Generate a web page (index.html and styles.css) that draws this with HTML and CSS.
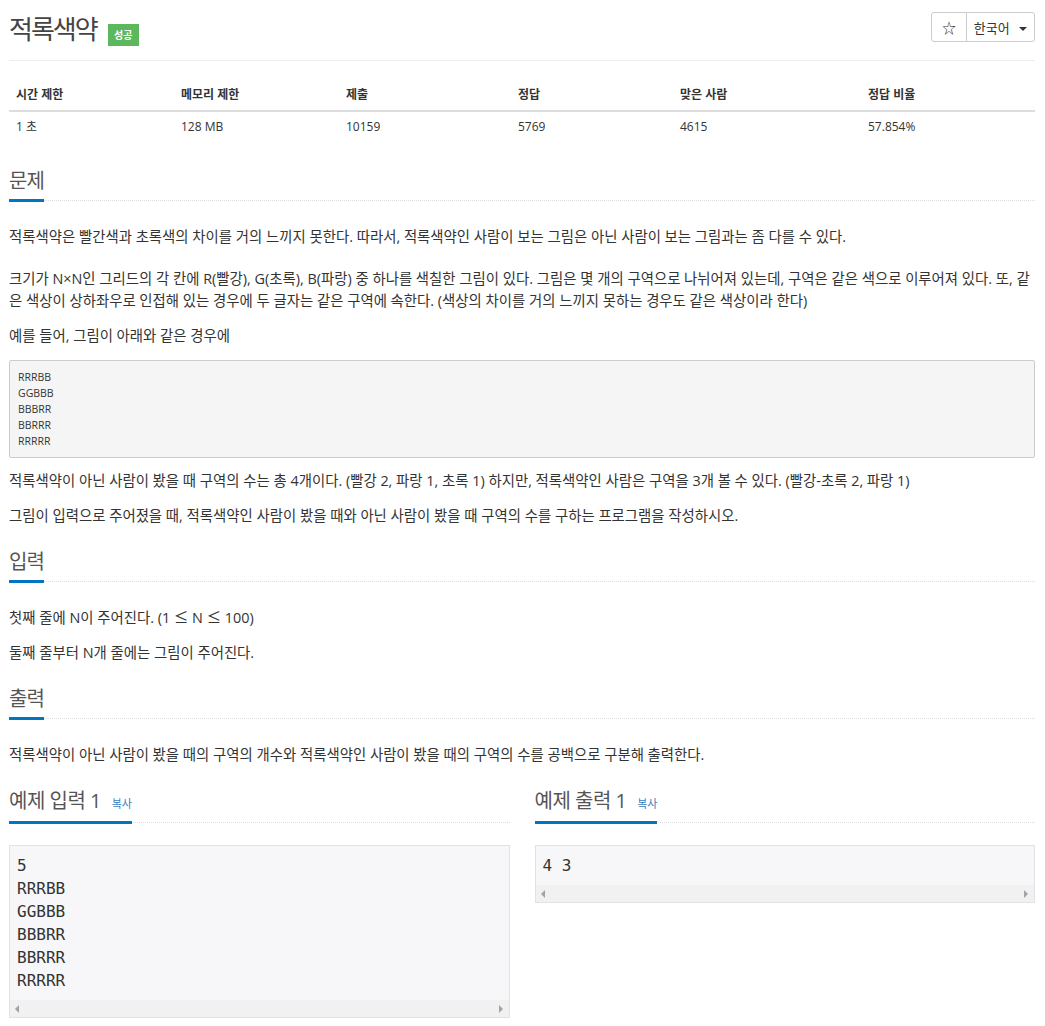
FILE: index.html
```html
<!DOCTYPE html>
<html>
<head>
    <meta charset="utf-8">
    <title>적록색약</title>
    <link rel="stylesheet" href="styles.css">
</head>
<body>
    <div class="page">
        <div class="page-header">
            <h1 class="title">적록색약<span class="badge-ok">성공</span></h1>
            <div class="btn-group">
                <button class="btn btn-star">☆</button>
                <button class="btn btn-lang">한국어 <span class="caret"></span></button>
            </div>
        </div>

        <table class="info">
            <thead>
                <tr>
                    <th>시간 제한</th>
                    <th>메모리 제한</th>
                    <th>제출</th>
                    <th>정답</th>
                    <th>맞은 사람</th>
                    <th>정답 비율</th>
                </tr>
            </thead>
            <tbody>
                <tr>
                    <td>1 초</td>
                    <td>128 MB</td>
                    <td>10159</td>
                    <td>5769</td>
                    <td>4615</td>
                    <td>57.854%</td>
                </tr>
            </tbody>
        </table>

        <!-- 문제 -->
        <section class="problem-section">
            <div class="headline"><h2>문제</h2></div>
            <div class="problem-text">
                <p>적록색약은 빨간색과 초록색의 차이를 거의 느끼지 못한다. 따라서, 적록색약인 사람이 보는 그림은 아닌 사람이 보는 그림과는 좀 다를 수 있다.</p>
                <p class="tall-first">크기가 N×N인 그리드의 각 칸에 R(빨강), G(초록), B(파랑) 중 하나를 색칠한 그림이 있다. 그림은 몇 개의 구역으로 나뉘어져 있는데, 구역은 같은 색으로 이루어져 있다. 또, 같은 색상이 상하좌우로 인접해 있는 경우에 두 글자는 같은 구역에 속한다. (색상의 차이를 거의 느끼지 못하는 경우도 같은 색상이라 한다)</p>
                <p>예를 들어, 그림이 아래와 같은 경우에</p>
                <pre class="grid-example">RRRBB
GGBBB
BBBRR
BBRRR
RRRRR</pre>
                <p>적록색약이 아닌 사람이 봤을 때 구역의 수는 총 4개이다. (빨강 2, 파랑 1, 초록 1) 하지만, 적록색약인 사람은 구역을 3개 볼 수 있다. (빨강-초록 2, 파랑 1)</p>
                <p>그림이 입력으로 주어졌을 때, 적록색약인 사람이 봤을 때와 아닌 사람이 봤을 때 구역의 수를 구하는 프로그램을 작성하시오.</p>
            </div>
        </section>

        <!-- 입력 -->
        <section class="problem-section">
            <div class="headline"><h2>입력</h2></div>
            <div class="problem-text">
                <p>첫째 줄에 N이 주어진다. (1 <span class="math">≤</span> N <span class="math">≤</span> 100)</p>
                <p>둘째 줄부터 N개 줄에는 그림이 주어진다.</p>
            </div>
        </section>

        <!-- 출력 -->
        <section class="problem-section">
            <div class="headline"><h2>출력</h2></div>
            <div class="problem-text">
                <p>적록색약이 아닌 사람이 봤을 때의 구역의 개수와 적록색약인 사람이 봤을 때의 구역의 수를 공백으로 구분해 출력한다.</p>
            </div>
        </section>

        <div class="samples">
            <section class="sample">
                <div class="headline"><h2>예제 입력 1 <a class="copy">복사</a></h2></div>
                <div class="sampledata">
                    <pre>5
RRRBB
GGBBB
BBBRR
BBRRR
RRRRR</pre>
                    <div class="hscroll"><span class="arrow-left"></span><span class="arrow-right"></span></div>
                </div>
            </section>
            <section class="sample">
                <div class="headline"><h2>예제 출력 1 <a class="copy">복사</a></h2></div>
                <div class="sampledata">
                    <pre>4 3</pre>
                    <div class="hscroll"><span class="arrow-left"></span><span class="arrow-right"></span></div>
                </div>
            </section>
        </div>
    </div>
</body>
</html>
```

FILE: styles.css
```css
body {
    font-family: "Open Sans", "Noto Sans CJK KR", sans-serif;
    color: #333;
    background-color: #fff;
    margin: 0;
    padding: 0;
}
.page {
    margin-left: 9px;
    width: 1026px;
}
.page-header {
    display: flex;
    justify-content: space-between;
    align-items: flex-start;
    padding-top: 12px;
    height: 48px;
    border-bottom: 1px solid #eee;
}
.title {
    display: flex;
    align-items: center;
    margin: 0;
    font-size: 26px;
    font-weight: normal;
    letter-spacing: -2px;
    line-height: 30px;
    color: #444;
}
.badge-ok {
    display: inline-block;
    margin-left: 11px;
    margin-top: 12px;
    width: 31px;
    height: 22px;
    line-height: 22px;
    text-align: center;
    background-color: #5cb85c;
    color: #fff;
    font-size: 10px;
    font-weight: bold;
    letter-spacing: 0;
}
.btn-group {
    display: flex;
}
.btn {
    height: 30px;
    background-color: #fff;
    border: 1px solid #ccc;
    font-family: "Open Sans", "Noto Sans CJK KR", sans-serif;
    font-size: 13px;
    color: #333;
    padding: 0;
}
.btn-star {
    width: 36px;
    border-radius: 3px 0 0 3px;
    font-size: 14px;
}
.btn-lang {
    width: 69px;
    margin-left: -1px;
    border-radius: 0 3px 3px 0;
}
.caret {
    display: inline-block;
    margin-left: 6px;
    vertical-align: middle;
    border-top: 4px solid #333;
    border-left: 4px solid transparent;
    border-right: 4px solid transparent;
}

/* info table */
.info {
    width: 100%;
    margin-top: 19px;
    border-collapse: collapse;
    font-size: 12px;
}
.info th,
.info td {
    text-align: left;
    padding: 7px 7px;
    line-height: 16px;
}
.info th {
    border-bottom: 2px solid #ddd;
}
.info th:nth-child(1) { width: 151px; }
.info th:nth-child(2) { width: 151px; }
.info th:nth-child(3) { width: 158px; }
.info th:nth-child(4) { width: 148px; }
.info th:nth-child(5) { width: 174px; }

/* sections */
.problem-section {
    margin-top: 25px;
}
.problem-section + .problem-section {
    margin-top: 21px;
}
.headline {
    border-bottom: 1px dotted #ddd;
}
.headline h2 {
    display: inline-block;
    margin: 0 0 -2px 0;
    padding-bottom: 4px;
    font-size: 20px;
    font-weight: normal;
    line-height: 28px;
    letter-spacing: -1px;
    color: #555;
    border-bottom: 3px solid #0076c0;
}
.problem-text {
    padding-top: 25px;
    font-size: 14.4px;
}
.problem-text p {
    margin: 0 0 13px 0;
    line-height: 22px;
}
.problem-text p.tall-first {
    padding-top: 7px;
}
.math {
    font-family: "Noto Sans CJK KR", sans-serif;
    line-height: 1;
}
.grid-example {
    margin: 0 0 12px 0;
    padding: 8px 8px;
    background-color: #f5f5f5;
    border: 1px solid #ccc;
    border-radius: 2px;
    font-family: "Open Sans", sans-serif;
    font-size: 10.5px;
    line-height: 16px;
}

/* samples */
.samples {
    display: grid;
    grid-template-columns: 1fr 1fr;
    column-gap: 25px;
    margin-top: 21px;
    align-items: start;
}
.sample .headline h2 {
    letter-spacing: -0.5px;
    padding-bottom: 3px;
}
.copy {
    margin-left: 6px;
    font-size: 11px;
    color: #3a7fc0;
    letter-spacing: 0;
}
.sampledata {
    margin-top: 22px;
    background-color: #f7f7f9;
    border: 1px solid #e1e1e8;
}
.sampledata pre {
    margin: 0;
    padding: 8px 7px 8px 7px;
    font-family: "DejaVu Sans Mono", monospace;
    font-size: 16px;
    line-height: 23px;
    color: #333;
}
.hscroll {
    position: relative;
    height: 17px;
    background-color: #f1f1f1;
}
.arrow-left,
.arrow-right {
    position: absolute;
    top: 5px;
    border-top: 4px solid transparent;
    border-bottom: 4px solid transparent;
}
.arrow-left {
    left: 5px;
    border-right: 4px solid #a3a3a3;
}
.arrow-right {
    right: 6px;
    border-left: 4px solid #a3a3a3;
}
```
